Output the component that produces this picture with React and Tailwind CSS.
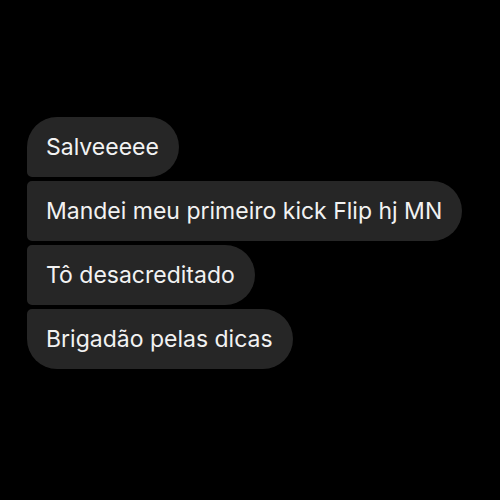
export default function App() {
  const msgs = [
    { t: "Salveeeee", r: "rounded-tl-[30px] rounded-bl-[5px]" },
    { t: "Mandei meu primeiro kick Flip hj MN", r: "rounded-tl-[5px] rounded-bl-[5px]" },
    { t: "Tô desacreditado", r: "rounded-tl-[5px] rounded-bl-[5px]" },
    { t: "Brigadão pelas dicas", r: "rounded-tl-[5px] rounded-bl-[30px]" },
  ];
  return (
    <div className="w-[500px] h-[500px] bg-black flex flex-col items-start gap-[4px] pl-[27px] pt-[117px]" style={{ fontFamily: "Inter, 'Noto Sans', sans-serif" }}>
      {msgs.map((m, i) => (
        <div key={i} className={`h-[60px] flex items-center bg-[#262626] pl-[19px] pr-[20px] rounded-r-[30px] ${m.r} text-[23px] text-[#f2f2f2]`}>
          {m.t}
        </div>
      ))}
    </div>
  );
}
